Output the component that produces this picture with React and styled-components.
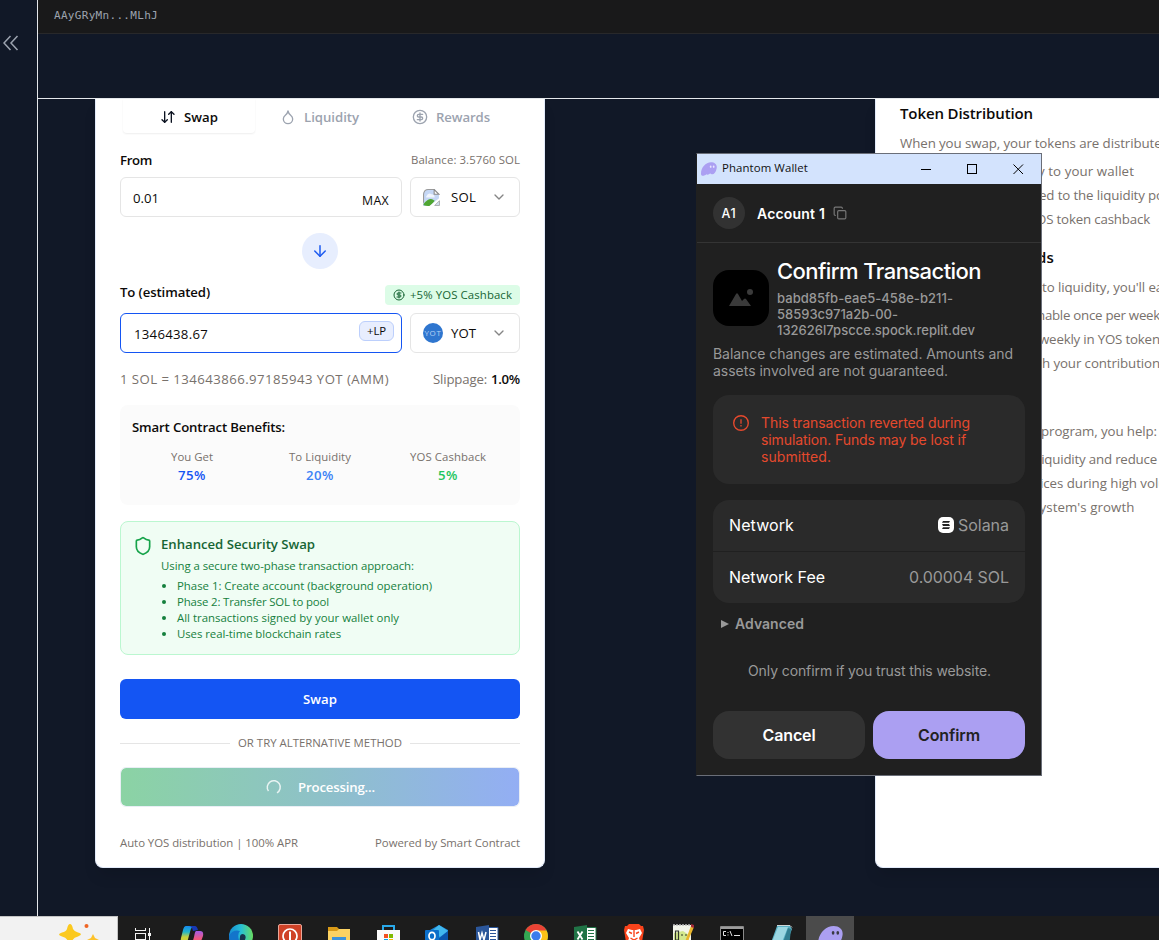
import React, { useLayoutEffect, useRef, useState } from "react";
import styled, { createGlobalStyle, css } from "styled-components";
import {
  ArrowDown,
  ArrowDownUp,
  ChevronDown,
  CircleDollarSign,
  Copy,
  Droplet,
  Shield,
} from "lucide-react";

const UI = `"Open Sans", "Noto Sans", sans-serif`;
const WALLET = `Inter, "Liberation Sans", sans-serif`;
const MONO = `"DejaVu Sans Mono", "Liberation Mono", monospace`;

const GlobalStyle = createGlobalStyle`
  *, *::before, *::after { box-sizing: border-box; }
  html, body { margin: 0; padding: 0; background: #111827; }
  body { width: 1159px; height: 940px; overflow: hidden; font-family: ${UI}; }
  ul { list-style: none; margin: 0; padding: 0; }
  button { border: 0; margin: 0; padding: 0; background: none; }
  svg { display: block; flex: none; }
`;

/* ---------- text ---------- */

const TextSpan = styled.span`
  display: inline-block;
  flex: none;
  white-space: nowrap;
  font-family: ${(p) => p.$font || UI};
  font-size: ${(p) => p.$size}px;
  font-weight: ${(p) => p.$weight || 400};
  line-height: ${(p) => p.$line || 16}px;
  color: ${(p) => p.$color || "#0c0a09"};
`;

/* Spreads its glyphs evenly so that the line is `width` pixels long. */
function Text({ width, size = 13.2, weight, color, font, line, children }) {
  const ref = useRef(null);
  const [spacing, setSpacing] = useState(0);
  useLayoutEffect(() => {
    if (!width) return;
    const el = ref.current;
    el.style.letterSpacing = "0px";
    const natural = el.getBoundingClientRect().width;
    const next = (width - natural) / String(children).length;
    el.style.letterSpacing = `${next}px`;
    setSpacing(next);
  }, [width, children]);
  return (
    <TextSpan
      ref={ref}
      $size={size}
      $weight={weight}
      $color={color}
      $font={font}
      $line={line}
      style={{ letterSpacing: `${spacing}px` }}
    >
      {children}
    </TextSpan>
  );
}

/* ---------- shell ---------- */

const Desktop = styled.div`
  position: relative;
  display: flex;
  flex-direction: column;
  width: 1159px;
  height: 940px;
  overflow: hidden;
  background: #111827;
`;

const Shell = styled.div`
  display: flex;
  height: 916px;
`;

const Sidebar = styled.aside`
  width: 38px;
  padding: 35px 0 0 3px;
  border-right: 1px solid #e5e7eb;
`;

const Main = styled.main`
  display: flex;
  flex-direction: column;
  flex: 1;
  min-width: 0;
`;

const TopBar = styled.div`
  display: flex;
  align-items: center;
  height: 34px;
  padding: 0 0 1px 16px;
  background: #19191a;
  border-bottom: 1px solid #28282a;
`;

const Header = styled.header`
  height: 65px;
  border-bottom: 1px solid #e5e7eb;
`;

const Content = styled.div`
  display: flex;
  align-items: flex-start;
  gap: 330px;
  height: 817px;
  padding-left: 57px;
  overflow: hidden;
`;

const Card = styled.section`
  flex: none;
  width: 450px;
  height: 769px;
  background: #fff;
  border: 1px solid #e3ebfa;
  border-top: 0;
  border-radius: 0 0 8px 8px;
  box-shadow: 0 10px 15px -3px rgba(0, 0, 0, 0.12);
`;

/* ---------- swap card ---------- */

const SwapBody = styled(Card)`
  display: flex;
  flex-direction: column;
  padding: 0 24px;
`;

const Tabs = styled.nav`
  display: grid;
  grid-template-columns: 132px 121px 134px;
  gap: 4px;
  height: 34px;
  padding: 0 3px;
`;

const Tab = styled.div`
  display: flex;
  align-items: center;
  justify-content: center;
  gap: 8px;
  padding-top: 2px;
  color: ${(p) => (p.$active ? "#0b1220" : "#9ca3af")};
  border-radius: 0 0 4px 4px;
  ${(p) =>
    p.$active &&
    css`
      box-shadow: 0 1px 2px rgba(0, 0, 0, 0.07);
    `}
`;

const Row = styled.div`
  display: flex;
  align-items: ${(p) => p.$align || "center"};
  justify-content: space-between;
  height: ${(p) => p.$height}px;
  margin-top: ${(p) => p.$top || 0}px;
`;

const FieldRow = styled.div`
  display: flex;
  gap: 8px;
  height: 40px;
  margin-top: ${(p) => p.$top}px;
`;

const Field = styled.div`
  display: flex;
  align-items: center;
  justify-content: space-between;
  width: 282px;
  padding: 1px 12px 0 ${(p) => (p.$focused ? 13 : 12)}px;
  border: 1px solid ${(p) => (p.$focused ? "#1455f3" : "#e5e5e5")};
  border-radius: 6px;
`;

const MaxLabel = styled.span`
  display: flex;
  padding-top: 6px;
`;

const LpTag = styled.span`
  display: flex;
  align-items: center;
  height: 20px;
  margin: -5px -5px 0 0;
  padding: 0 7px;
  background: #e8eefe;
  border: 1px solid #bccffc;
  border-radius: 6px;
`;

const TokenSelect = styled.div`
  display: flex;
  align-items: center;
  width: 110px;
  padding: 0 12px 0 12px;
  border: 1px solid #e5e5e5;
  border-radius: 6px;
  color: #858585;
`;

const TokenIcon = styled.span`
  display: flex;
  align-items: center;
  width: 28px;
`;

const ChevronSlot = styled.span`
  margin-left: auto;
`;

const YotCoin = styled.span`
  display: flex;
  align-items: center;
  justify-content: center;
  width: 20px;
  height: 20px;
  overflow: hidden;
  background: #2f76cf;
  border-radius: 50%;
`;

const FlipButton = styled.button`
  display: flex;
  align-items: center;
  justify-content: center;
  width: 36px;
  height: 36px;
  margin: 16px auto 0;
  color: #1d5bf0;
  background: #e7eefe;
  border-radius: 50%;
`;

const CashbackBadge = styled.span`
  display: flex;
  align-items: center;
  gap: 5px;
  height: 20px;
  padding: 0 8px;
  color: #166534;
  background: #dcfce7;
  border-radius: 4px;
`;

const Inline = styled.span`
  display: flex;
  gap: 4px;
`;

const Benefits = styled.div`
  display: flex;
  flex-direction: column;
  align-items: flex-start;
  height: 100px;
  margin-top: 16px;
  padding: 14px 12px 0;
  background: #fbfbfb;
  border-radius: 8px;
`;

const BenefitGrid = styled.div`
  display: grid;
  grid-template-columns: repeat(3, 1fr);
  gap: 8px;
  align-self: stretch;
  margin-top: 14px;
`;

const Benefit = styled.div`
  display: flex;
  flex-direction: column;
  align-items: center;
  gap: 2px;
`;

const Security = styled.div`
  display: flex;
  gap: 8px;
  height: 134px;
  margin-top: 16px;
  padding: 14px 12px 0;
  color: #16a34a;
  background: #f0fdf4;
  border: 1px solid #bbf7d0;
  border-radius: 8px;
`;

const SecurityText = styled.div`
  display: flex;
  flex-direction: column;
  align-items: flex-start;
`;

const SecurityList = styled.ul`
  margin-top: -2px;
`;

const SecurityItem = styled.li`
  display: flex;
  align-items: center;
  height: 16px;
  padding-bottom: 1px;

  &::before {
    content: "";
    width: 4px;
    height: 4px;
    margin: 1px 11px 0 1px;
    background: #15803d;
    border-radius: 50%;
  }
`;

const ShieldSlot = styled.span`
  width: 20px;
`;

const ActionButton = styled.button`
  display: flex;
  align-items: center;
  justify-content: center;
  height: 40px;
  margin-top: ${(p) => p.$top}px;
  border-radius: 6px;
  ${(p) =>
    p.$busy
      ? css`
          gap: 16px;
          padding-left: 1px;
          background: linear-gradient(90deg, #8bd3a4, #8ec1c8 50%, #93aef4);
          background-clip: padding-box;
          border: 1px solid #e9eef5;
        `
      : css`
          background: #1455f3;
        `}
`;

const Divider = styled.div`
  display: flex;
  align-items: center;
  gap: 8px;
  height: 16px;
  margin-top: 16px;

  &::before,
  &::after {
    content: "";
    flex: 1;
    height: 1px;
    background: #e5e5e5;
  }
`;

/* ---------- info card ---------- */

const InfoBody = styled(Card)`
  padding: 0 0 0 24px;
`;

const InfoRow = styled.div`
  display: flex;
  align-items: center;
  height: 24px;
  margin-top: ${(p) => p.$top}px;
  padding-left: ${(p) => p.$indent || 0}px;
`;

/* ---------- wallet window ---------- */

const Window = styled.section`
  position: absolute;
  left: 696px;
  top: 153px;
  display: flex;
  flex-direction: column;
  width: 346px;
  height: 623px;
  background: #202020;
  border: 1px solid #6a6e78;
  border-left-color: #202020;
`;

const TitleBar = styled.div`
  display: flex;
  align-items: center;
  height: 30px;
  padding: 0 17px 0 4px;
  background: #d3e3fd;
`;

const TitleText = styled.span`
  display: flex;
  flex: 1;
  padding: 0 0 2px 5px;
`;

const WindowControls = styled.span`
  display: flex;
  gap: 35px;
`;

const AccountBar = styled.div`
  display: flex;
  align-items: center;
  height: 59px;
  padding: 0 16px;
  border-bottom: 1px solid #343434;
  color: #777;
`;

const Avatar = styled.span`
  display: flex;
  align-items: center;
  justify-content: center;
  width: 32px;
  height: 32px;
  padding-top: 1px;
  margin-right: 12px;
  background: #323232;
  border-radius: 50%;
`;

const AccountName = styled.span`
  display: flex;
  padding-top: 2px;
`;

const CopySlot = styled.span`
  margin-left: 8px;
`;

const Request = styled.div`
  display: flex;
  gap: 8px;
  height: 95px;
  padding: 12px 16px 0;
`;

const SiteIcon = styled.div`
  display: flex;
  align-items: center;
  justify-content: center;
  width: 56px;
  height: 56px;
  margin-top: 15px;
  background: #000;
  border-radius: 16px;
`;

const Stack = styled.div`
  display: flex;
  flex-direction: column;
  align-items: flex-start;
`;

const Domain = styled(Stack)`
  margin-top: 2px;
`;

const Notice = styled(Stack)`
  height: 57px;
  padding: 7px 16px 0;
`;

const Panel = styled.div`
  margin: ${(p) => p.$top || 0}px 16px 0;
  overflow: hidden;
  background: #2a2a2a;
  border-radius: 16px;
`;

const Warning = styled(Panel)`
  display: flex;
  gap: 12px;
  height: 89px;
  padding: 20px 20px 0;
`;

const WarningText = styled(Stack)`
  margin-top: -1px;
`;

const Detail = styled.div`
  display: flex;
  align-items: center;
  justify-content: space-between;
  height: ${(p) => p.$height}px;
  padding: 0 16px 1px;

  & + & {
    border-top: 1px solid #202020;
  }
`;

const Value = styled.span`
  display: flex;
  align-items: center;
  gap: 4px;
`;

const Advanced = styled.div`
  display: flex;
  align-items: center;
  gap: 6px;
  height: 24px;
  margin-top: 9px;
  padding-left: 24px;
`;

const Trust = styled.div`
  display: flex;
  justify-content: center;
  margin-top: 26px;
  padding-left: 1px;
`;

const WalletActions = styled.div`
  display: flex;
  gap: 8px;
  margin-top: 31px;
  padding: 0 16px;
`;

const WalletButton = styled.button`
  display: flex;
  align-items: center;
  justify-content: center;
  width: 152px;
  height: 48px;
  background: ${(p) => (p.$primary ? "#ab9ff2" : "#323232")};
  border-radius: 16px;
`;

/* ---------- taskbar ---------- */

const Taskbar = styled.footer`
  display: flex;
  height: 24px;
  overflow: hidden;
  background: #1c1c1c;
`;

const SearchBox = styled.div`
  display: flex;
  align-items: flex-start;
  justify-content: flex-end;
  width: 118px;
  height: 40px;
  padding: 5px 17px 0 0;
  background: #f2f2f2;
  border: solid #c4c4c4;
  border-width: 1px 1px 0 0;
`;

const Apps = styled.div`
  display: grid;
  grid-template-columns: repeat(14, 1fr);
  width: 688px;
`;

const AppSlot = styled.div`
  display: flex;
  justify-content: center;
  width: ${(p) => (p.$active ? "48px" : "auto")};
  height: 40px;
  padding-top: 8px;
  background: ${(p) => (p.$active ? "#4b4b4b" : "transparent")};
`;

/* ---------- drawings ---------- */

const Collapse = () => (
  <svg width="16" height="16" viewBox="0 0 16 16" fill="none" stroke="#9ca3af" strokeWidth="1.500">
    <path d="M7.500 1 1 8l6.500 7M14.500 1 8 8l6.500 7" />
  </svg>
);

const Ghost = ({ size = 16 }) => (
  <svg width={size} height={size} viewBox="0 0 24 24">
    <path
      d="M0 19C0 10 7 2 15 2c6 0 9.500 4 8.500 9-1 6-4 9-6.500 9-2 0-2-2-4-1-2 2-4 2-5 1-2 2-4 2.500-5 2-2 0-3-1-3-3z"
      fill="#ab9ff2"
    />
    <ellipse cx="14.500" cy="8.500" rx="1.300" ry="1.800" fill={size > 20 ? "#3a3a44" : "#e9e5ff"} />
    <ellipse cx="19" cy="8.500" rx="1.300" ry="1.800" fill={size > 20 ? "#3a3a44" : "#e9e5ff"} />
  </svg>
);

const BrokenImage = () => (
  <svg width="17" height="17" viewBox="0 0 16 16">
    <path d="M4 0h7l4 5v5l-6 6H0V4z" fill="#c5d7f5" />
    <path d="M.5 13V5Q1 .5 5 .5h6" fill="none" stroke="#9a9a9a" />
    <path d="M3 7q2-4 5-2 3 0 3 3H3z" fill="#fff" opacity=".75" />
    <path d="M.5 15v-1q5-6 9-4l1.500 1-4 5q-5 0-6.500-1z" fill="#4fa632" />
    <path d="M10.500.5V5H15z" fill="#fff" stroke="#8a8a8a" />
    <path d="M6 16 16 8v8z" fill="#fff" />
    <path d="M11 15.500h4.500V11z" fill="#cfe0ee" stroke="#9a9a9a" strokeWidth=".7" />
  </svg>
);

const Spinner = () => (
  <svg width="16" height="16" viewBox="0 0 16 16" fill="none">
    <path d="M2.500 12A6.500 6.500 0 1 1 11 13.800" stroke="#fff" strokeOpacity=".8" strokeWidth="1.500" />
  </svg>
);

const Minimize = () => (
  <svg width="11" height="11" viewBox="0 0 11 11" shapeRendering="crispEdges">
    <path d="M0 5.500h10" stroke="#000" />
  </svg>
);
const Maximize = () => (
  <svg width="11" height="11" viewBox="0 0 11 11" shapeRendering="crispEdges">
    <path d="M.5.5h9v9h-9z" fill="none" stroke="#000" />
  </svg>
);
const Close = () => (
  <svg width="11" height="11" viewBox="0 0 11 11">
    <path d="M.5.500l9.500 9.500M10 .500.500 10" stroke="#000" />
  </svg>
);

const Landscape = () => (
  <svg width="24" height="20" viewBox="0 0 24 20">
    <path d="M0 18 7 6q1-1.500 2 0l4 7 2-2q1-1 2 0l5 7z" fill="#3a3a3a" />
    <circle cx="21" cy="4" r="3" fill="#3a3a3a" />
  </svg>
);

const Alert = () => (
  <svg width="16" height="16" viewBox="0 0 16 16" fill="none" stroke="#e5492d">
    <circle cx="8" cy="8" r="7.300" strokeWidth="1.400" />
    <path d="M8 4.300v4.400M8 10v1.600" strokeWidth="1.300" />
  </svg>
);

const SolanaLogo = () => (
  <svg width="16" height="16" viewBox="0 0 16 16">
    <rect width="16" height="16" rx="5" fill="#fff" />
    <path d="M5 4h7l-1 1.800H4zM4 7.100h7l1 1.800H5zM5 10.200h7L11 12H4z" fill="#222" />
  </svg>
);

const Triangle = () => (
  <svg width="8" height="8" viewBox="0 0 8 8">
    <path d="M0 0 8 4 0 8z" fill="#999" />
  </svg>
);

const Sparkles = () => (
  <svg width="42" height="24" viewBox="0 0 42 24">
    <path d="M12 2q2 0 3 5 1 2 5 3.500 6 1.500 0 4-4 1-5 3l-3 6-3-6q-1-2-5-3-6-2 0-4 4-1 5-3.500Q10 2 12 2z" fill="#fbc91f" />
    <path d="M35 12l2 4 4 2v6H29v-6l4-2z" fill="#fdc22a" />
    <circle cx="28.500" cy="4" r="2" fill="#ef6524" />
  </svg>
);

const TaskView = () => (
  <svg width="18" height="18" viewBox="0 0 18 18" fill="none" stroke="#f4f4f4" shapeRendering="crispEdges">
    <path d="M1.500 4v2.500h10V4M1.500 9.500h10v6h-10zM15.500 4v14" />
    <path d="M14 9h3v3h-3z" fill="#f4f4f4" stroke="none" />
  </svg>
);

const Copilot = () => (
  <svg width="24" height="24" viewBox="0 0 24 24">
    <defs>
      <linearGradient id="copA" x1="0" y1="0" x2="0" y2="1">
        <stop offset="0" stopColor="#1689ed" />
        <stop offset=".35" stopColor="#21b6c9" />
        <stop offset=".65" stopColor="#c9d23c" />
      </linearGradient>
      <linearGradient id="copB" x1="0" y1="0" x2="0" y2="1">
        <stop offset="0" stopColor="#a35be8" />
        <stop offset=".6" stopColor="#f0587c" />
      </linearGradient>
    </defs>
    <path d="M6 2h8q-3 1-4 6L7 19H3q-3 0-2-5l2-8q1-4 3-4z" fill="url(#copA)" />
    <path d="M9 2h6q2 0 3 4l-5 1-1-3q-1-2-3-2z" fill="#1738b5" />
    <path d="M16 7h4q4 0 3 5l-3 8h-8l2-7q1-6 2-6z" fill="url(#copB)" />
  </svg>
);

const Edge = () => (
  <svg width="24" height="24" viewBox="0 0 24 24">
    <defs>
      <linearGradient id="edge" x1="0" x2="1">
        <stop offset="0" stopColor="#168bd3" />
        <stop offset=".5" stopColor="#27bfd4" />
        <stop offset="1" stopColor="#69dc62" />
      </linearGradient>
    </defs>
    <circle cx="12" cy="12" r="12" fill="url(#edge)" />
    <path d="M0 12q4-7 11-5-3 3-1 9v8Q0 22 0 12z" fill="#1375cb" />
    <path d="M11 13q0-3 3-3 4 1 2 6h8v8H13q-3-4-2-11z" fill="#17324d" />
  </svg>
);

const Power = () => (
  <svg width="24" height="24" viewBox="0 0 24 24">
    <rect x=".5" y=".5" width="23" height="23" rx="1.500" fill="#cf4227" stroke="#e8a79a" />
    <circle cx="12" cy="12" r="7" fill="none" stroke="#fff" strokeWidth="1.700" />
    <path d="M12 7.500v9" stroke="#fff" strokeWidth="2" />
  </svg>
);

const Folder = () => (
  <svg width="24" height="24" viewBox="0 0 24 24">
    <path d="M1 3h9l2 2h11v6H1z" fill="#d99a17" />
    <path d="M1 7h9l2-2h11v19H1z" fill="#fbd263" />
    <path d="M5 13h14v11H5z" fill="#3d93dc" />
  </svg>
);

const Store = () => (
  <svg width="24" height="24" viewBox="0 0 24 24">
    <path d="M7 7V2h11v5" fill="none" stroke="#29a9ea" strokeWidth="2" />
    <path d="M1 6h23v18H1z" fill="#fafafa" />
    <path d="M8 10h4v4H8z" fill="#f25022" />
    <path d="M13 10h4v4h-4z" fill="#7fba00" />
    <path d="M8 15h4v4H8z" fill="#00a4ef" />
    <path d="M13 15h4v4h-4z" fill="#ffb900" />
  </svg>
);

const Outlook = () => (
  <svg width="24" height="24" viewBox="0 0 24 24">
    <path d="M5 6 14 1l9 5v18H5z" fill="#1a86d9" />
    <path d="M14 1l9 6-8 6-8-6z" fill="#41b8ee" />
    <path d="M13 15 23 7v17H13z" fill="#0b56ad" />
    <rect x="0" y="6" width="14" height="15" rx="1" fill="#0c6fca" />
    <ellipse cx="7" cy="12" rx="3" ry="3.700" fill="none" stroke="#fff" strokeWidth="1.700" />
  </svg>
);

const OfficeIcon = ({ color, children }) => (
  <svg width="24" height="24" viewBox="0 0 24 24">
    <path d="M13 3.500h10V24H13z" fill="#fff" stroke={color} />
    <path d="M15 6.500h6M15 9.500h6M15 12.500h6M15 15.500h6" stroke={color} />
    <path d="M1 3l13-2v23H1z" fill={color} />
    {children}
  </svg>
);

const Word = () => (
  <OfficeIcon color="#2b569a">
    <path d="M3.500 8l1.500 8 2-7 2 7 2-8" fill="none" stroke="#fff" strokeWidth="1.500" />
  </OfficeIcon>
);
const Excel = () => (
  <OfficeIcon color="#207346">
    <path d="M4.500 7.500l5 8M9.500 7.500l-5 8" fill="none" stroke="#fff" strokeWidth="1.800" />
  </OfficeIcon>
);

const Chrome = () => (
  <svg width="24" height="24" viewBox="0 0 24 24">
    <circle cx="12" cy="12" r="12" fill="#34a853" />
    <path d="M1.600 6A12 12 0 0 1 22.400 6L12 12z" fill="#ea4335" />
    <path d="M12 6.500h10.600A12 12 0 0 1 13 24l3.500-9.500z" fill="#fbc116" />
    <circle cx="12" cy="12" r="6" fill="#fff" />
    <circle cx="12" cy="12" r="4.700" fill="#3b7ded" />
  </svg>
);

const Brave = () => (
  <svg width="24" height="24" viewBox="0 0 24 24">
    <path d="M7 0h10l2 2 2 0 1 4-2 12-8 6-8-6L2 6l1-4h2z" fill="#f9431b" />
    <path d="M6 5l4 1h4l4-1 2 4-3 5 1 3-6 4-6-4 1-3-3-5z" fill="#fff" />
    <path d="M7 8l3 1.500M17 8l-3 1.500M12 6v7M8.500 14l3.500 2 3.500-2" stroke="#f9431b" strokeWidth="1.400" fill="none" />
  </svg>
);

const NotepadPlus = () => (
  <svg width="24" height="24" viewBox="0 0 24 24">
    <path d="M2 1h18v23H2z" fill="#f3f5ea" />
    <path d="M3 9l9-2 6 4v13H3z" fill="#d3e88c" />
    <path d="M2 1h18" stroke="#bbb" strokeDasharray="2 1" strokeWidth="1.500" />
    <path d="M4.500 7h3v9h-3zM10 11h2M14 11h2" stroke="#30362a" strokeWidth="1.200" fill="none" />
    <path d="M20 2l3 1-6 14-3 2 1-4z" fill="#e9b52c" />
    <path d="M20 0l3 1v3l-3-1z" fill="#a32a38" />
  </svg>
);

const Terminal = () => (
  <svg width="24" height="24" viewBox="0 0 24 24">
    <path d="M.5 2.500h23V22H.5z" fill="#000" stroke="#8a8a8a" />
    <path d="M1 4h22" stroke="#d0d0d0" strokeWidth="1.500" />
    <path d="M6 7.500H3.500v4H6M8 8v1M8 10.500v1M10 7l2 5M14 11.500h6" stroke="#e2e2e2" fill="none" />
  </svg>
);

const Notebook = () => (
  <svg width="24" height="24" viewBox="0 0 24 24">
    <path d="M8 2h13l2 3-7 19H0z" fill="#5bb0c4" />
    <path d="M9 3h10l-8 20H1z" fill="#9bd7e2" />
    <path d="M8 1.500h13l2 2" stroke="#cdd6d8" fill="none" />
    <path d="M19 4l3 1-2 19h-8z" fill="#317f91" />
  </svg>
);

/* ---------- page ---------- */

const GREY = "#78716c";
const GREEN = "#15803d";
const DIM = "#999999";

const securitySteps = [
  ["Phase 1: Create account (background operation)", 255],
  ["Phase 2: Transfer SOL to pool", 152],
  ["All transactions signed by your wallet only", 222],
  ["Uses real-time blockchain rates", 164],
];

const benefits = [
  ["You Get", 42, "75%", 28, "#1455f3"],
  ["To Liquidity", 62, "20%", 28, "#3b82f6"],
  ["YOS Cashback", 76, "5%", 20, "#22c55e"],
];

const infoLines = [
  { text: "When you swap, your tokens are distributed:", width: 273, top: 6 },
  { text: "y to your wallet", width: 96, indent: 138, top: 4 },
  { text: "ed to the liquidity pool", width: 136, indent: 139 },
  { text: "OS token cashback", width: 114, indent: 136 },
  { text: "ds", width: 17, indent: 137, top: 14, heading: true },
  { text: "to liquidity, you'll earn:", width: 138, indent: 142, top: 6 },
  { text: "nable once per week", width: 123, indent: 137, top: 4 },
  { text: "weekly in YOS tokens", width: 127, indent: 139 },
  { text: "h your contribution", width: 118, indent: 142 },
  { text: "program, you help:", width: 116, indent: 141, top: 44 },
  { text: "liquidity and reduce", width: 119, indent: 138, top: 4 },
  { text: "ices during high volume", width: 146, indent: 140 },
  { text: "ystem's growth", width: 95, indent: 139.5 },
];

const apps = [
  TaskView, Copilot, Edge, Power, Folder, Store, Outlook,
  Word, Chrome, Excel, Brave, NotepadPlus, Terminal, Notebook,
];

function SwapCard() {
  return (
    <SwapBody>
      <Tabs>
        <Tab $active>
          <ArrowDownUp size={16} strokeWidth={2} />
          <Text width={34} weight={600}>Swap</Text>
        </Tab>
        <Tab>
          <Droplet size={16} strokeWidth={2} />
          <Text width={55} weight={600} color="#9ca3af">Liquidity</Text>
        </Tab>
        <Tab>
          <CircleDollarSign size={16} strokeWidth={2} />
          <Text width={54} weight={600} color="#9ca3af">Rewards</Text>
        </Tab>
      </Tabs>

      <Row $height={20} $top={17}>
        <Text width={32} weight={600} line={18}>From</Text>
        <Text width={109} size={11.4} color={GREY}>Balance: 3.5760 SOL</Text>
      </Row>
      <FieldRow $top={7}>
        <Field>
          <Text width={26}>0.01</Text>
          <MaxLabel><Text width={27} size={12.3}>MAX</Text></MaxLabel>
        </Field>
        <TokenSelect>
          <TokenIcon><BrokenImage /></TokenIcon>
          <Text width={25}>SOL</Text>
          <ChevronSlot><ChevronDown size={16} /></ChevronSlot>
        </TokenSelect>
      </FieldRow>

      <FlipButton><ArrowDown size={18} /></FlipButton>

      <Row $height={20} $top={16} $align="flex-start">
        <Text width={90} weight={600} line={14}>To (estimated)</Text>
        <CashbackBadge>
          <CircleDollarSign size={12} />
          <Text width={102} size={11.4} color="#166534">+5% YOS Cashback</Text>
        </CashbackBadge>
      </Row>
      <FieldRow $top={8}>
        <Field $focused>
          <Text width={74}>1346438.67</Text>
          <LpTag><Text width={19} size={11.4}>+LP</Text></LpTag>
        </Field>
        <TokenSelect>
          <TokenIcon>
            <YotCoin><Text width={17} size={8} color="#b5d2f5">YOT</Text></YotCoin>
          </TokenIcon>
          <Text width={25}>YOT</Text>
          <ChevronSlot><ChevronDown size={16} /></ChevronSlot>
        </TokenSelect>
      </FieldRow>

      <Row $height={20} $top={16}>
        <Text width={269} color={GREY}>1 SOL = 134643866.97185943 YOT (AMM)</Text>
        <Inline>
          <Text width={54} color={GREY}>Slippage:</Text>
          <Text width={29} weight={600}>1.0%</Text>
        </Inline>
      </Row>

      <Benefits>
        <Text width={153} weight={600}>Smart Contract Benefits:</Text>
        <BenefitGrid>
          {benefits.map(([label, labelWidth, value, valueWidth, color]) => (
            <Benefit key={label}>
              <Text width={labelWidth} size={11.4} color={GREY}>{label}</Text>
              <Text width={valueWidth} weight={600} color={color}>{value}</Text>
            </Benefit>
          ))}
        </BenefitGrid>
      </Benefits>

      <Security>
        <ShieldSlot><Shield size={20} /></ShieldSlot>
        <SecurityText>
          <Text width={154} weight={600} color="#166534">Enhanced Security Swap</Text>
          <Text width={253} size={11.4} color={GREEN} line={28}>
            Using a secure two-phase transaction approach:
          </Text>
          <SecurityList>
            {securitySteps.map(([step, width]) => (
              <SecurityItem key={step}>
                <Text width={width} size={11.4} color={GREEN}>{step}</Text>
              </SecurityItem>
            ))}
          </SecurityList>
        </SecurityText>
      </Security>

      <ActionButton $top={24}>
        <Text width={34} weight={600} color="#fff">Swap</Text>
      </ActionButton>
      <Divider>
        <Text width={164} size={11.4} color={GREY}>OR TRY ALTERNATIVE METHOD</Text>
      </Divider>
      <ActionButton $top={16} $busy>
        <Spinner />
        <Text width={77} weight={600} color="#fff">Processing...</Text>
      </ActionButton>
      <Row $height={16} $top={28}>
        <Text width={178} size={11.4} color={GREY}>Auto YOS distribution | 100% APR</Text>
        <Text width={145} size={11.4} color={GREY}>Powered by Smart Contract</Text>
      </Row>
    </SwapBody>
  );
}

function InfoCard() {
  return (
    <InfoBody>
      <InfoRow $top={2}>
        <Text width={133} size={15} weight={600}>Token Distribution</Text>
      </InfoRow>
      {infoLines.map(({ text, width, indent, top = 0, heading }) => (
        <InfoRow key={text} $top={top} $indent={indent}>
          <Text
            width={width}
            size={heading ? 15 : 13.3}
            weight={heading ? 600 : 400}
            color={heading ? undefined : GREY}
          >
            {text}
          </Text>
        </InfoRow>
      ))}
    </InfoBody>
  );
}

function WalletWindow() {
  return (
    <Window>
      <TitleBar>
        <Ghost />
        <TitleText><Text width={86} size={11.4} color="#111">Phantom Wallet</Text></TitleText>
        <WindowControls><Minimize /><Maximize /><Close /></WindowControls>
      </TitleBar>
      <AccountBar>
        <Avatar><Text font={WALLET} width={15} size={12.5} weight={500} color="#fff">A1</Text></Avatar>
        <AccountName>
          <Text font={WALLET} width={68} size={14} weight={600} color="#fff">Account 1</Text>
        </AccountName>
        <CopySlot><Copy size={14} /></CopySlot>
      </AccountBar>
      <Request>
        <SiteIcon><Landscape /></SiteIcon>
        <Stack>
          <Text font={WALLET} width={204} size={22} weight={450} color="#fff" line={33}>
            Confirm Transaction
          </Text>
          <Domain>
            <Text font={WALLET} width={176} size={13} weight={500} color={DIM}>babd85fb-eae5-458e-b211-</Text>
            <Text font={WALLET} width={121} size={13} weight={500} color={DIM}>58593c971a2b-00-</Text>
            <Text font={WALLET} width={198} size={13} weight={500} color={DIM}>132626l7pscce.spock.replit.dev</Text>
          </Domain>
        </Stack>
      </Request>
      <Notice>
        <Text font={WALLET} width={300} size={14} color={DIM} line={17}>
          Balance changes are estimated. Amounts and
        </Text>
        <Text font={WALLET} width={235} size={14} color={DIM} line={17}>
          assets involved are not guaranteed.
        </Text>
      </Notice>
      <Warning>
        <Alert />
        <WarningText>
          <Text font={WALLET} width={209} size={14} color="#e5492d" line={17}>This transaction reverted during</Text>
          <Text font={WALLET} width={205} size={14} color="#e5492d" line={17}>simulation. Funds may be lost if</Text>
          <Text font={WALLET} width={70} size={14} color="#e5492d" line={17}>submitted.</Text>
        </WarningText>
      </Warning>
      <Panel $top={16}>
        <Detail $height={51}>
          <Text font={WALLET} width={65} size={16} color="#fff">Network</Text>
          <Value>
            <SolanaLogo />
            <Text font={WALLET} width={51} size={16} color={DIM}>Solana</Text>
          </Value>
        </Detail>
        <Detail $height={52}>
          <Text font={WALLET} width={96} size={16} color="#fff">Network Fee</Text>
          <Text font={WALLET} width={100} size={16} color={DIM}>0.00004 SOL</Text>
        </Detail>
      </Panel>
      <Advanced>
        <Triangle />
        <Text font={WALLET} width={69} size={14} weight={600} color={DIM}>Advanced</Text>
      </Advanced>
      <Trust>
        <Text font={WALLET} width={243} size={14} color={DIM} line={18}>
          Only confirm if you trust this website.
        </Text>
      </Trust>
      <WalletActions>
        <WalletButton>
          <Text font={WALLET} width={53} size={16} weight={600} color="#fff">Cancel</Text>
        </WalletButton>
        <WalletButton $primary>
          <Text font={WALLET} width={62} size={16} weight={600} color="#222">Confirm</Text>
        </WalletButton>
      </WalletActions>
    </Window>
  );
}

export default function App() {
  return (
    <Desktop>
      <GlobalStyle />
      <Shell>
        <Sidebar><Collapse /></Sidebar>
        <Main>
          <TopBar>
            <Text font={MONO} width={104} size={11} color="#9ca3af">AAyGRyMn...MLhJ</Text>
          </TopBar>
          <Header />
          <Content>
            <SwapCard />
            <InfoCard />
          </Content>
        </Main>
      </Shell>
      <Taskbar>
        <SearchBox><Sparkles /></SearchBox>
        <Apps>
          {apps.map((Icon, i) => (
            <AppSlot key={i}><Icon /></AppSlot>
          ))}
        </Apps>
        <AppSlot $active><Ghost size={25} /></AppSlot>
      </Taskbar>
      <WalletWindow />
    </Desktop>
  );
}
